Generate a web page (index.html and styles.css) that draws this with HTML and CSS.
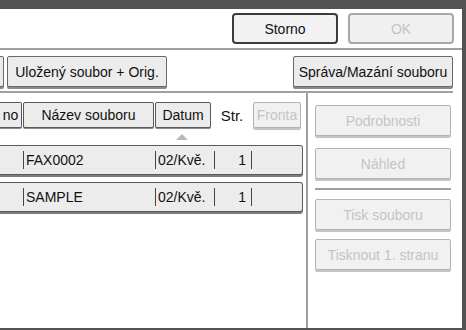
FILE: index.html
```html
<!DOCTYPE html>
<html lang="cs">
<head>
  <meta charset="UTF-8">
  <title>Tisk uloženého souboru</title>
  <link rel="stylesheet" href="styles.css">
</head>
<body>
  <div class="screen">
    <div class="topbar">
      <div class="btn btn-main">Storno</div>
      <div class="btn btn-main disabled">OK</div>
    </div>
    <div class="toolbar">
      <div class="btn stub"></div>
      <div class="btn tool">Uložený soubor + Orig.</div>
      <div class="spacer"></div>
      <div class="btn tool">Správa/Mazání souboru</div>
    </div>
    <div class="main">
      <div class="list">
        <div class="list-head">
          <div class="btn head head-user">no</div>
          <div class="btn head head-name">Název souboru</div>
          <div class="btn head head-date">Datum</div>
          <span class="head-label">Str.</span>
          <div class="btn head head-queue disabled">Fronta</div>
        </div>
        <div class="sort-mark"><span class="tri"></span></div>
        <div class="file-row">
          <span class="cell c-user"></span>
          <span class="cell c-name">FAX0002</span>
          <span class="cell c-date">02/Kvě.</span>
          <span class="cell c-pages">1</span>
          <span class="cell c-end"></span>
        </div>
        <div class="file-row">
          <span class="cell c-user"></span>
          <span class="cell c-name">SAMPLE</span>
          <span class="cell c-date">02/Kvě.</span>
          <span class="cell c-pages">1</span>
          <span class="cell c-end"></span>
        </div>
      </div>
      <div class="side">
        <div class="btn side-btn disabled">Podrobnosti</div>
        <div class="btn side-btn disabled">Náhled</div>
        <div class="side-sep"></div>
        <div class="btn side-btn disabled">Tisk souboru</div>
        <div class="btn side-btn disabled">Tisknout 1. stranu</div>
      </div>
    </div>
  </div>
</body>
</html>
```

FILE: styles.css
```css
html, body {
  margin: 0;
  padding: 0;
}
body {
  width: 466px;
  height: 330px;
  background: #525252;
  font-family: "Liberation Sans", Arial, sans-serif;
  font-size: 14px;
  color: #111;
  overflow: hidden;
}
.screen {
  margin-top: 9px;
  width: 462px;
  height: 319px;
  background: #fff;
  display: flex;
  flex-direction: column;
}

/* BOTONES */
.btn {
  box-sizing: border-box;
  display: flex;
  align-items: center;
  justify-content: center;
  background: #ececec;
  border: 1px solid #6a6a6a;
  border-radius: 2px;
  box-shadow: 0 2px 0 #8a8a8a;
  white-space: nowrap;
}
.btn.disabled {
  color: #c4c4c4;
  border-color: #b4b4b4;
  background: #f1f1f1;
  box-shadow: 0 2px 0 #c4c4c4;
}

/* CABECERA */
.topbar {
  display: flex;
  justify-content: flex-end;
  gap: 10px;
  padding: 4px 8px 4px 0;
  border-bottom: 2px solid #a0a0a0;
}
.btn-main {
  width: 106px;
  height: 31px;
  border: 2px solid #3c3c3c;
  border-radius: 4px;
  background: #f2f2f2;
  box-shadow: none;
}
.btn-main.disabled {
  border-color: #a8a8a8;
  background: #f0f0f0;
  box-shadow: none;
}

.toolbar {
  display: flex;
  align-items: flex-start;
  margin-right: 9px;
  padding: 6px 0 4px 0;
  border-bottom: 2px solid #a0a0a0;
}
.btn.stub {
  width: 40px;
  height: 31px;
  margin-left: -36px;
  margin-right: 3px;
}
.tool {
  width: 160px;
  height: 31px;
}
.spacer {
  flex: 1;
}

/* LISTA */
.main {
  flex: 1;
  display: flex;
}
.list {
  width: 306px;
  border-right: 2px solid #a0a0a0;
  padding-top: 9px;
}
.list-head {
  display: flex;
  align-items: center;
  height: 26px;
}
.head {
  height: 26px;
  border-color: #5a5a5a;
  box-shadow: 0 1px 0 #8a8a8a;
}
.head-user {
  width: 22px;
  border-left: none;
  border-radius: 0 2px 2px 0;
  margin-right: 1px;
}
.head-name {
  width: 131px;
  margin-right: 1px;
}
.head-date {
  width: 56px;
}
.head-label {
  width: 42px;
  text-align: center;
  font-size: 15px;
}
.head-queue {
  width: 48px;
  box-shadow: 0 1px 0 #c4c4c4;
}
.sort-mark {
  height: 17px;
  display: flex;
  align-items: center;
  padding-left: 176px;
}
.tri {
  width: 0;
  height: 0;
  border-left: 6px solid transparent;
  border-right: 6px solid transparent;
  border-bottom: 6px solid #b8b8b8;
}
.file-row {
  box-sizing: border-box;
  display: flex;
  align-items: center;
  width: 303px;
  height: 30px;
  margin-bottom: 7px;
  background: #ececec;
  border: 1px solid #5a5a5a;
  border-left: none;
  border-radius: 0 3px 3px 0;
  box-shadow: 0 2px 0 #7e7e7e;
}
.cell {
  box-sizing: border-box;
  height: 18px;
  line-height: 18px;
  border-left: 1px solid #444;
  white-space: nowrap;
}
.c-user {
  width: 23px;
  border-left: none;
}
.c-name {
  width: 132px;
  padding-left: 2px;
}
.c-date {
  width: 59px;
  padding-left: 2px;
}
.c-pages {
  width: 37px;
  text-align: right;
  padding-right: 5px;
}
.c-end {
  width: 10px;
}

/* PANEL LATERAL */
.side {
  flex: 1;
  display: flex;
  flex-direction: column;
  padding: 12px 11px 0 7px;
}
.side-btn {
  height: 31px;
  margin-bottom: 12px;
}
.side-sep {
  height: 2px;
  background: #a0a0a0;
  margin: -3px 0 9px 0;
}
.side-sep + .side-btn {
  margin-bottom: 9px;
}
```
